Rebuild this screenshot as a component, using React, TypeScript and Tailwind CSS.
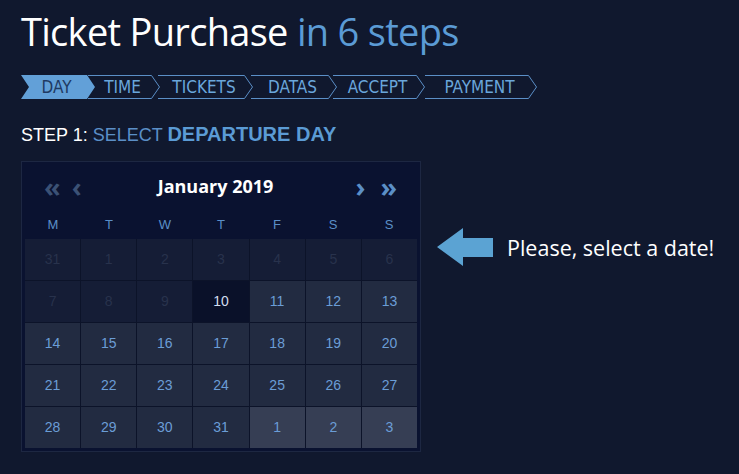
import React from 'react'

const steps = [
  { label: 'DAY', w: 74, ml: 0, active: true },
  { label: 'TIME', w: 72, ml: -7, active: false },
  { label: 'TICKETS', w: 95, ml: -2, active: false },
  { label: 'DATAS', w: 86, ml: -2, active: false },
  { label: 'ACCEPT', w: 92, ml: -4, active: false },
  { label: 'PAYMENT', w: 112, ml: 0, active: false },
]

type Day = { n: number; kind: 'past' | 'today' | 'open' | 'next' }

const days: Day[] = [
  { n: 31, kind: 'past' },
  ...[1, 2, 3, 4, 5, 6, 7, 8, 9].map((n) => ({ n, kind: 'past' as const })),
  { n: 10, kind: 'today' },
  ...Array.from({ length: 21 }, (_, i) => ({ n: i + 11, kind: 'open' as const })),
  ...[1, 2, 3].map((n) => ({ n, kind: 'next' as const })),
]

const cellClass = {
  past: 'bg-[#151d36] text-[#28324c]',
  today: 'bg-[#0a1129] text-[#d3def0]',
  open: 'bg-[#222b41] text-[#6b9dd6]',
  next: 'bg-[#363e54] text-[#6b9dd6]',
}

function Step({ label, w, ml, active }: { label: string; w: number; ml: number; active: boolean }) {
  return (
    <div
      className="relative flex h-[24px] items-center justify-center pr-[3px]"
      style={{ width: w, marginLeft: ml }}
    >
      <svg className="absolute inset-0" width={w} height={24} viewBox={`0 0 ${w} 24`}>
        {active ? (
          <polygon points={`0,0 ${w - 8},0 ${w},12 ${w - 8},24 0,24 8,12`} fill="#62a0d8" />
        ) : (
          <path
            d={`M0,0.5 H${w - 8.5} L${w - 0.5},12 L${w - 8.5},23.5 H0`}
            fill="none"
            stroke="#5b8fc7"
            strokeWidth="1"
          />
        )}
      </svg>
      <span
        className={`relative text-[17px] leading-none [font-stretch:condensed] ${
          active ? 'text-[#1f3a63]' : 'text-[#6aa6db]'
        }`}
        style={{ fontFamily: '"DejaVu Sans", sans-serif' }}
      >
        {label}
      </span>
    </div>
  )
}

export default function App() {
  return (
    <div className="min-h-screen w-full bg-[#10182e] pl-[21px] pt-[8px]">
      <h1
        className="text-[38px] leading-[46px] tracking-[-0.7px] text-white"
        style={{ fontFamily: '"Open Sans", sans-serif' }}
      >
        Ticket Purchase <span className="text-[#5b9bd5]">in 6 steps</span>
      </h1>

      <div className="mt-[21px] flex">
        {steps.map((s) => (
          <Step key={s.label} {...s} />
        ))}
      </div>

      <div
        className="mt-[24px] text-[18px] leading-[22px]"
        style={{ fontFamily: '"Liberation Sans", Arial, sans-serif' }}
      >
        <span className="text-white">STEP 1: </span>
        <span className="text-[#5b8fc7]">SELECT </span>
        <span className="text-[20px] font-bold text-[#5b9bd5]">DEPARTURE DAY</span>
      </div>

      <div className="mt-[15px] flex items-start">
        {/* calendar */}
        <div className="w-[400px] border border-[#1d2742] bg-[#0a1230] px-[3px] pb-[3px]">
          <div
            className="flex h-[49px] items-center"
            style={{ fontFamily: '"Open Sans", sans-serif' }}
          >
            <div className="flex items-center gap-[11px] pl-[19px] text-[27px] leading-none font-bold text-[#3b5175]">
              <span>«</span>
              <span>‹</span>
            </div>
            <div className="flex-1 pr-[6px] text-center text-[18px] font-bold text-white">
              January 2019
            </div>
            <div className="flex items-center gap-[15px] pr-[20px] text-[27px] leading-none font-bold text-[#5b8fc7]">
              <span>›</span>
              <span>»</span>
            </div>
          </div>
          <div
            className="grid h-[28px] grid-cols-7 items-center text-center text-[13px] text-[#5b8fc7]"
            style={{ fontFamily: '"Liberation Sans", Arial, sans-serif' }}
          >
            {['M', 'T', 'W', 'T', 'F', 'S', 'S'].map((d, i) => (
              <span key={i}>{d}</span>
            ))}
          </div>
          <div
            className="grid grid-cols-7 gap-px bg-[#0c1329] text-[14px]"
            style={{ fontFamily: '"Liberation Sans", Arial, sans-serif' }}
          >
            {days.map((d, i) => (
              <div key={i} className={`flex h-[41px] items-center justify-center ${cellClass[d.kind]}`}>
                {d.n}
              </div>
            ))}
          </div>
        </div>

        {/* hint */}
        <div className="ml-[16px] mt-[67px] flex items-center">
          <svg width="57" height="40" viewBox="0 0 57 40">
            <polygon points="0,19 26,0 26,10 56,10 56,29 26,29 26,38" fill="#5ba3d3" />
          </svg>
          <span
            className="ml-[13px] text-[21.5px] text-white"
            style={{ fontFamily: '"Open Sans", sans-serif' }}
          >
            Please, select a date!
          </span>
        </div>
      </div>
    </div>
  )
}
